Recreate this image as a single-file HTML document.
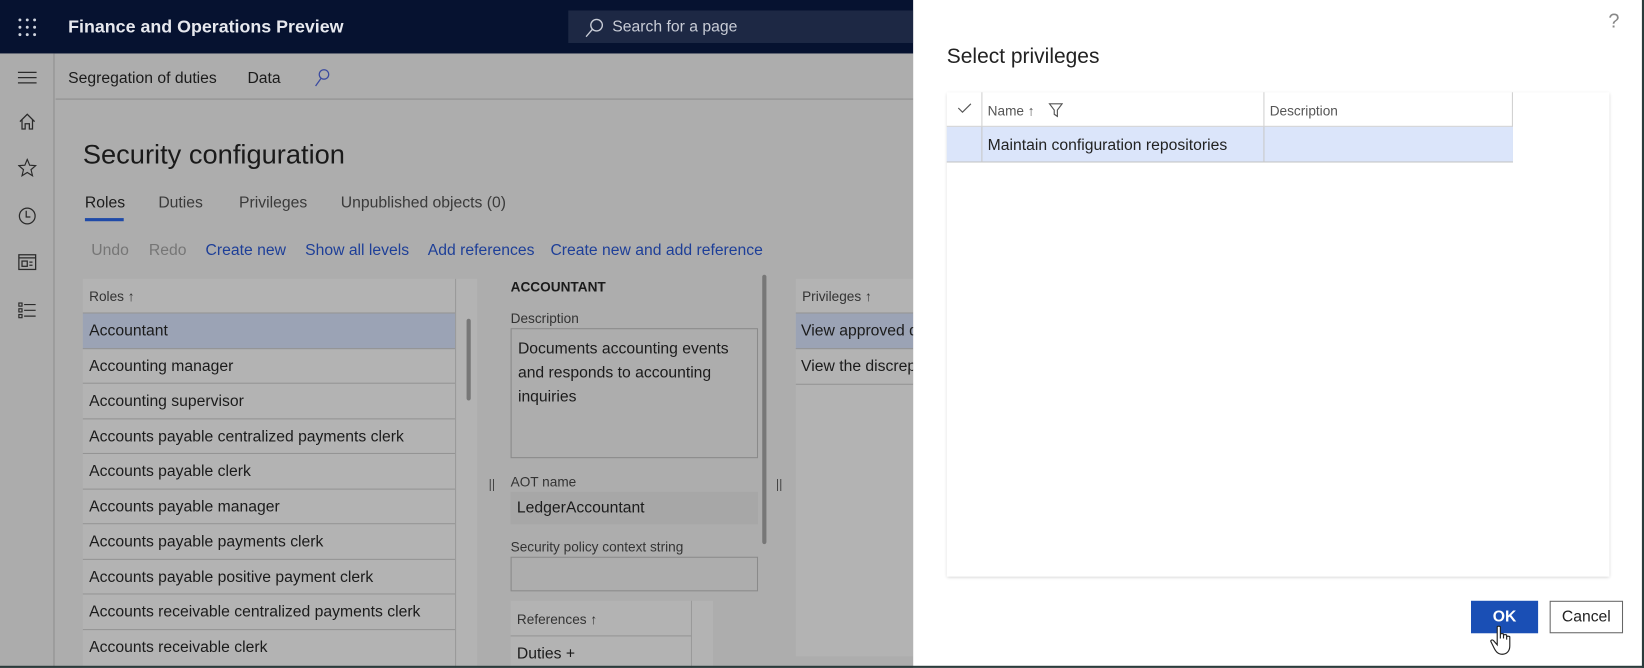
<!DOCTYPE html>
<html><head><meta charset="utf-8"><style>
*{margin:0;padding:0;box-sizing:border-box}
html,body{width:1644px;height:668px;overflow:hidden;background:#adadad;font-family:"Liberation Sans",sans-serif}
#w{position:absolute;left:0;top:0;width:1568px;height:637px;transform:scale(1.04847);transform-origin:0 0;background:#adadad;color:#1b1b1b}
.a{position:absolute;white-space:nowrap}
.row{position:absolute;left:0;width:355px;height:33.5px;border-bottom:1px solid #949494;font-size:15px;padding-left:6px;line-height:33px}
</style></head><body><div id="w">
<!-- top bar -->
<div class="a" style="left:0;top:0;width:871px;height:51px;background:#061230"></div>
<svg class="a" style="left:17;top:17px;left:17px" width="18" height="18" viewBox="0 0 18 18" fill="#cfd4de"><circle cx="2" cy="2" r="1.4"/><circle cx="9" cy="2" r="1.4"/><circle cx="16" cy="2" r="1.4"/><circle cx="2" cy="9" r="1.4"/><circle cx="9" cy="9" r="1.4"/><circle cx="16" cy="9" r="1.4"/><circle cx="2" cy="16" r="1.4"/><circle cx="9" cy="16" r="1.4"/><circle cx="16" cy="16" r="1.4"/></svg>
<div class="a" style="left:65px;top:16px;font-size:17px;font-weight:bold;color:#e6e8ee">Finance and Operations Preview</div>
<div class="a" style="left:542px;top:10px;width:329px;height:31px;background:#1d2844"></div>
<svg class="a" style="left:557px;top:17px" width="20" height="20" viewBox="0 0 20 20" fill="none" stroke="#c8ccd6" stroke-width="1.3"><circle cx="12" cy="7" r="5.5"/><path d="M8 11 L2 18"/></svg>
<div class="a" style="left:584px;top:17px;font-size:15px;color:#c8ccd6">Search for a page</div>
<!-- left nav -->
<div class="a" style="left:0;top:51px;width:52px;height:586px;background:#acacac;border-right:1px solid #8e8e8e"></div>
<svg class="a" style="left:17px;top:68px" width="18" height="12" stroke="#2a2a2a" stroke-width="1.2"><path d="M0 1H18M0 6H18M0 11H18"/></svg>
<svg class="a" style="left:17px;top:107px" width="18" height="18" viewBox="0 0 18 18" fill="none" stroke="#2a2a2a" stroke-width="1.2"><path d="M2 9L9 2L16 9M4 7V16H7V11H11V16H14V7"/></svg>
<svg class="a" style="left:17px;top:151px" width="18" height="18" viewBox="0 0 18 18" fill="none" stroke="#2a2a2a" stroke-width="1.1"><path d="M9 1L11.3 6.6L17 7L12.6 10.8L14 16.6L9 13.5L4 16.6L5.4 10.8L1 7L6.7 6.6Z"/></svg>
<svg class="a" style="left:17px;top:197px" width="18" height="18" viewBox="0 0 18 18" fill="none" stroke="#2a2a2a" stroke-width="1.2"><circle cx="9" cy="9" r="7.5"/><path d="M8 4V10H12"/></svg>
<svg class="a" style="left:17px;top:242px" width="18" height="16" viewBox="0 0 18 16" fill="none" stroke="#2a2a2a" stroke-width="1.2"><rect x="1" y="1" width="16" height="14"/><path d="M1 4H17"/><rect x="4" y="7" width="5" height="5"/><path d="M11 8H14M11 11H14"/></svg>
<svg class="a" style="left:17px;top:288px" width="18" height="16" viewBox="0 0 18 16" fill="none" stroke="#2a2a2a" stroke-width="1.1"><rect x="1" y="1" width="3" height="3"/><rect x="1" y="6.5" width="3" height="3"/><rect x="1" y="12" width="3" height="3"/><path d="M6 2.5H17M6 8H17M6 13.5H17"/></svg>
<!-- secondary bar -->
<div class="a" style="left:53px;top:94px;width:818px;height:1px;background:#8e8e8e"></div>
<div class="a" style="left:65px;top:66px;font-size:15px">Segregation of duties</div>
<div class="a" style="left:236px;top:66px;font-size:15px">Data</div>
<svg class="a" style="left:298px;top:65px" width="18" height="18" viewBox="0 0 18 18" fill="none" stroke="#3a4aa0" stroke-width="1.2"><circle cx="11" cy="6" r="4.5"/><path d="M8 10L3 17"/></svg>
<div class="a" style="left:79px;top:132px;font-size:26px;color:#1a1a1a">Security configuration</div>
<div class="a" style="left:81px;top:185px;font-size:15px">Roles</div>
<div class="a" style="left:81px;top:208px;width:37px;height:3px;background:#1f4aa8"></div>
<div class="a" style="left:151px;top:185px;font-size:15px;color:#3a3a3a">Duties</div>
<div class="a" style="left:228px;top:185px;font-size:15px;color:#3a3a3a">Privileges</div>
<div class="a" style="left:325px;top:185px;font-size:15px;color:#3a3a3a">Unpublished objects (0)</div>
<div class="a" style="left:87px;top:230px;font-size:15px;color:#767676">Undo</div>
<div class="a" style="left:142px;top:230px;font-size:15px;color:#767676">Redo</div>
<div class="a" style="left:196px;top:230px;font-size:15px;color:#1e3f98">Create new</div>
<div class="a" style="left:291px;top:230px;font-size:15px;color:#1e3f98">Show all levels</div>
<div class="a" style="left:408px;top:230px;font-size:15px;color:#1e3f98">Add references</div>
<div class="a" style="left:525px;top:230px;font-size:15px;color:#1e3f98">Create new and add reference</div>
<!-- roles grid -->
<div class="a" style="left:79px;top:266px;width:376px;height:371px;background:#b3b3b3">
 <div class="a" style="left:0;top:0;width:355px;height:33px;border-bottom:1px solid #949494;font-size:13px;color:#333;padding:9px 6px">Roles &#8593;</div>
 <div class="a" style="left:355px;top:0;width:1px;height:371px;background:#9a9a9a"></div>
 <div class="a" style="left:366px;top:38px;width:4px;height:78px;background:#777;border-radius:2px"></div>
 <div class="row" style="top:33px;background:#9ba3b5">Accountant</div>
 <div class="row" style="top:66.5px">Accounting manager</div>
 <div class="row" style="top:100px">Accounting supervisor</div>
 <div class="row" style="top:133.5px">Accounts payable centralized payments clerk</div>
 <div class="row" style="top:167px">Accounts payable clerk</div>
 <div class="row" style="top:200.5px">Accounts payable manager</div>
 <div class="row" style="top:234px">Accounts payable payments clerk</div>
 <div class="row" style="top:267.5px">Accounts payable positive payment clerk</div>
 <div class="row" style="top:301px">Accounts receivable centralized payments clerk</div>
 <div class="row" style="top:334.5px;border:none">Accounts receivable clerk</div>
</div>
<div class="a" style="left:466px;top:455px;font-size:12px;color:#444">||</div>
<div class="a" style="left:740px;top:455px;font-size:12px;color:#444">||</div>
<!-- middle -->
<div class="a" style="left:487px;top:266px;font-size:13px;font-weight:bold">ACCOUNTANT</div>
<div class="a" style="left:487px;top:296px;font-size:13px;color:#333">Description</div>
<div class="a" style="left:487px;top:313px;width:236px;height:124px;border:1px solid #8a8a8a;font-size:15px;padding:7px 6px;line-height:23px;white-space:normal">Documents accounting events and responds to accounting inquiries</div>
<div class="a" style="left:487px;top:452px;font-size:13px;color:#333">AOT name</div>
<div class="a" style="left:487px;top:469px;width:236px;height:31px;background:#a7a7a7;font-size:15px;padding:7px 6px">LedgerAccountant</div>
<div class="a" style="left:487px;top:514px;font-size:13px;color:#333">Security policy context string</div>
<div class="a" style="left:487px;top:531px;width:236px;height:33px;border:1px solid #8a8a8a"></div>
<div class="a" style="left:487px;top:573px;width:193px;height:64px;background:#b3b3b3">
 <div class="a" style="left:0;top:0;width:173px;height:34px;border-bottom:1px solid #949494;border-right:1px solid #9a9a9a;font-size:13px;color:#333;padding:10px 6px">References &#8593;</div>
 <div class="a" style="left:0;top:34px;width:173px;height:30px;border-right:1px solid #9a9a9a;font-size:15px;padding:8px 6px">Duties +</div>
</div>
<div class="a" style="left:727px;top:262px;width:4px;height:257px;background:#777;border-radius:2px"></div>
<!-- privileges grid -->
<div class="a" style="left:759px;top:266px;width:112px;height:360px;background:#b3b3b3">
 <div class="a" style="left:0;top:0;width:112px;height:33px;border-bottom:1px solid #949494;font-size:13px;color:#333;padding:9px 6px">Privileges &#8593;</div>
 <div class="a" style="left:0;top:33px;width:112px;height:34px;background:#9ba3b5;border-bottom:1px solid #949494;font-size:15px;padding:8px 5px">View approved d</div>
 <div class="a" style="left:0;top:67px;width:112px;height:34px;border-bottom:1px solid #949494;font-size:15px;padding:8px 5px;overflow:hidden">View the discrep</div>
</div>
<!-- dialog -->
<div class="a" style="left:871px;top:0;width:697px;height:637px;background:#fff">
 <div class="a" style="left:663px;top:10px;font-size:19px;color:#888">?</div>
 <div class="a" style="left:32px;top:43px;font-size:20px;color:#222">Select privileges</div>
 <div class="a" style="left:32px;top:88px;width:632px;height:462px;background:#fff;box-shadow:0 1px 3px rgba(0,0,0,.2)">
  <div class="a" style="left:0;top:0;width:540px;height:33px;border-bottom:1px solid #d0d0d0"></div>
  <div class="a" style="left:33px;top:0;width:1px;height:67px;background:#d0d0d0"></div>
  <div class="a" style="left:302px;top:0;width:1px;height:67px;background:#d0d0d0"></div>
  <div class="a" style="left:539px;top:0;width:1px;height:67px;background:#d0d0d0"></div>
  <svg class="a" style="left:10px;top:10px" width="14" height="10" fill="none" stroke="#555" stroke-width="1.1"><path d="M1 5L5 9L13 1"/></svg>
  <div class="a" style="left:39px;top:10px;font-size:13px;color:#555">Name &#8593;</div>
  <svg class="a" style="left:97px;top:10px" width="14" height="14" fill="none" stroke="#555" stroke-width="1.1"><path d="M1 1H13L8.5 7V13L5.5 11V7Z"/></svg>
  <div class="a" style="left:308px;top:10px;font-size:13px;color:#555">Description</div>
  <div class="a" style="left:0;top:33px;width:540px;height:34px;background:#dbe5fa;border-bottom:1px solid #c4c4c4"></div>
  <div class="a" style="left:33px;top:33px;width:1px;height:34px;background:#c8c8c8"></div>
  <div class="a" style="left:302px;top:33px;width:1px;height:34px;background:#c8c8c8"></div>
  <div class="a" style="left:39px;top:42px;font-size:15px;color:#222">Maintain configuration repositories</div>
 </div>
 <div class="a" style="left:532px;top:573px;width:64px;height:31px;background:#1a4fb5;color:#fff;font-size:15px;font-weight:bold;text-align:center;line-height:31px">OK</div>
 <div class="a" style="left:607px;top:573px;width:70px;height:31px;border:1px solid #666;color:#222;font-size:15px;text-align:center;line-height:29px">Cancel</div>
 <svg class="a" style="left:550px;top:596px" width="24" height="30" viewBox="0 0 24 30" fill="#fff" stroke="#222" stroke-width="1.1"><path d="M7 2C7 1 10 1 10 2V13V9C10 8 13 8 13 9V13V10C13 9 16 9 16 10V14V11.5C16 10.5 19 10.5 19 11.5V20C19 25 16 28 12 28C8 28 6 26 4 22L1 16C0.5 15 2 13.5 3.5 15L7 19Z"/></svg>
</div>
<div class="a" style="left:0;top:635px;width:1568px;height:2px;background:#2b3b3b"></div>
<div class="a" style="left:1566px;top:0;width:2px;height:637px;background:#2b3b3b"></div>
</div></body></html>
